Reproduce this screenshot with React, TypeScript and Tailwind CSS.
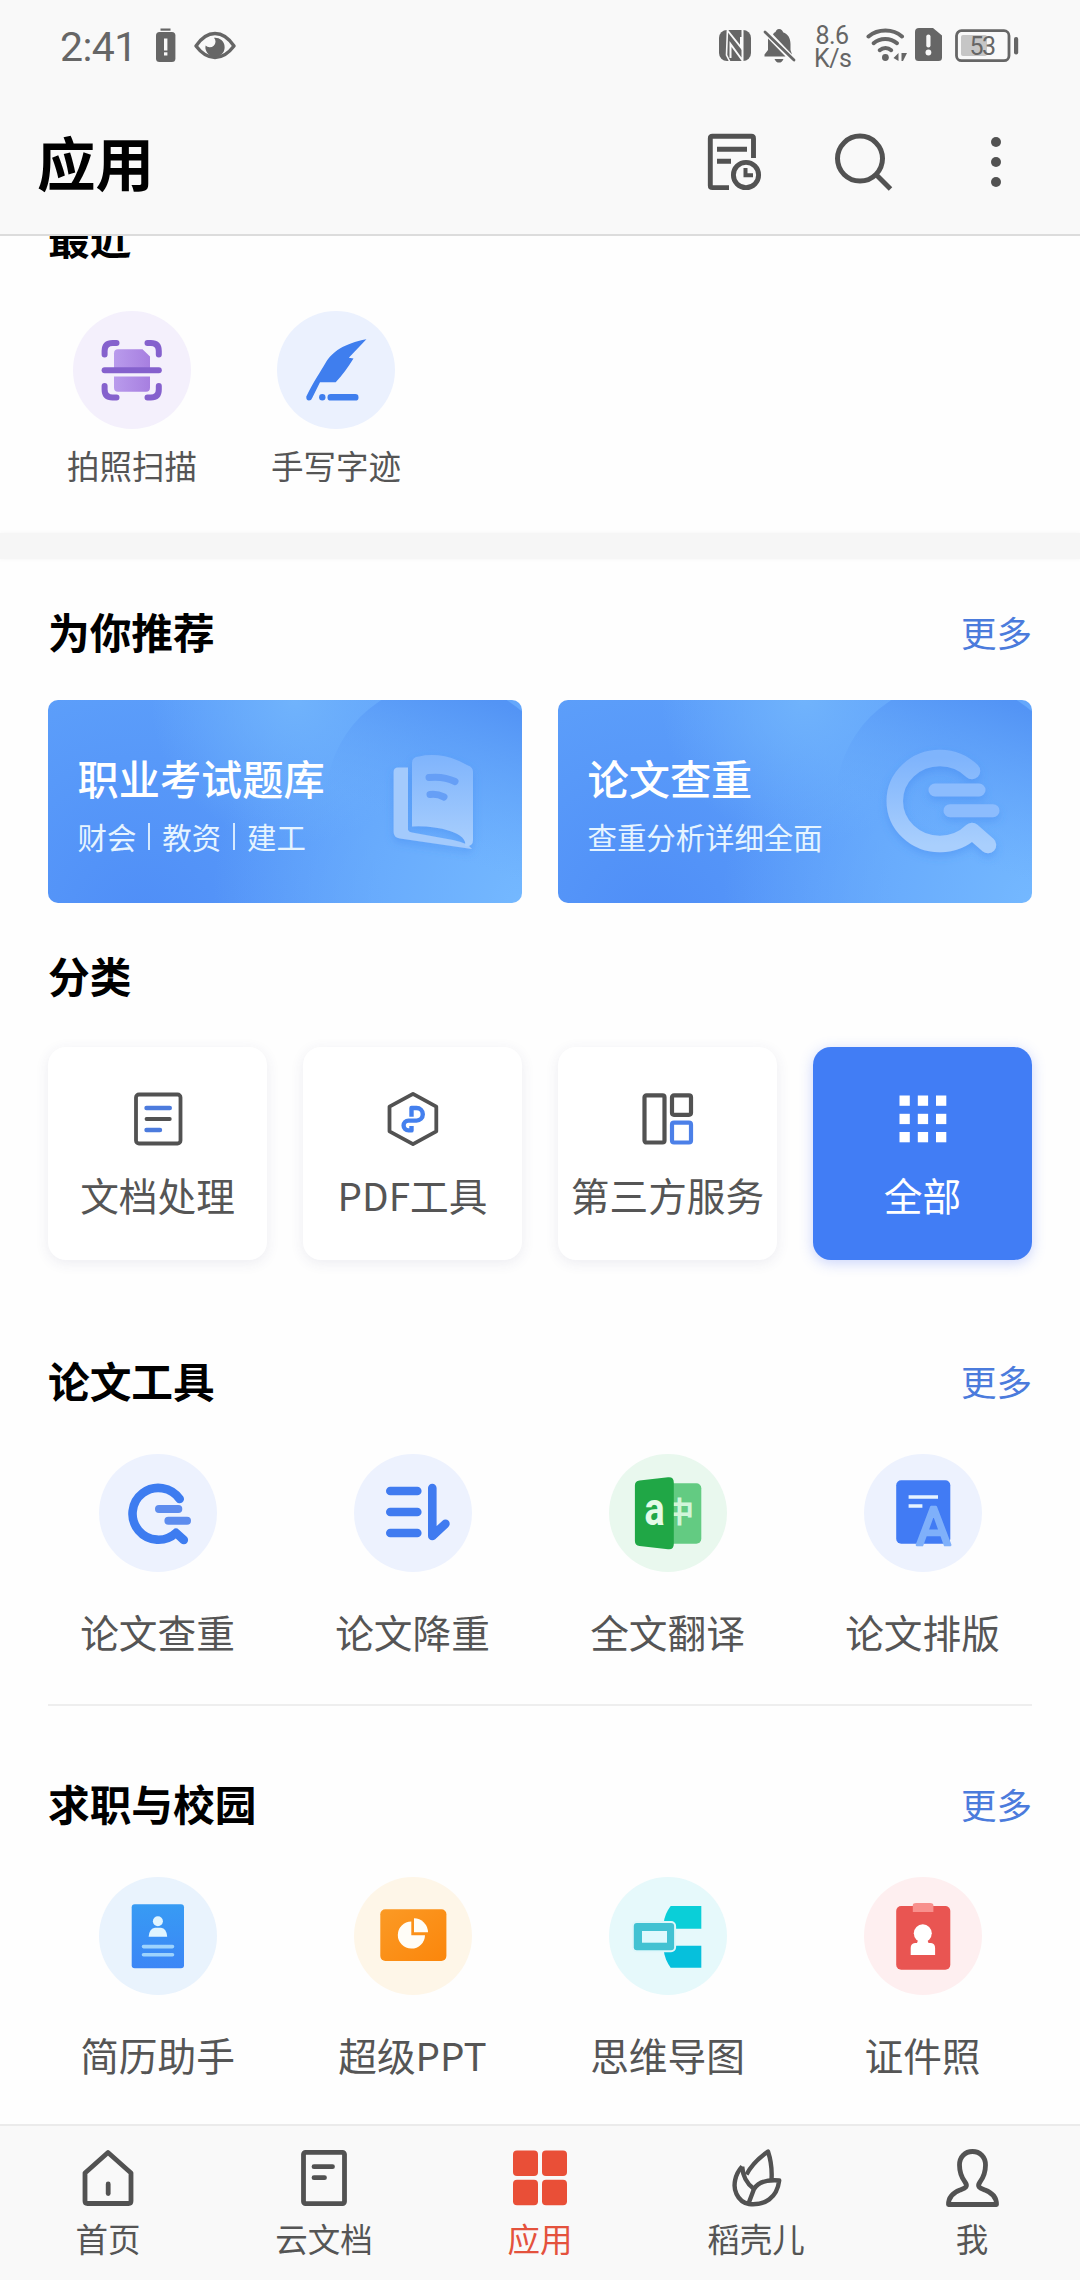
import React from "react";

const INK = "#525252";
const STATUS = "#666666";

/* ---------- Status bar ---------- */

function StatusBar() {
  return (
    <div className="flex h-[94px] items-center pl-[60px] text-[#666666]">
      <span className="w-[96px] font-[Roboto] text-[41px] leading-none tracking-[-0.6px]">2:41</span>
      <svg width="20" height="40" viewBox="0 0 20 40" fill={STATUS}>
        <rect x="4.5" y="1.5" width="10" height="2.2" />
        <rect x="0" y="5" width="19.4" height="30" rx="3.5" />
        <rect x="8" y="11.5" width="3.4" height="12" fill="#f9f9f9" />
        <rect x="8" y="25.3" width="3.4" height="3.2" fill="#f9f9f9" />
      </svg>
      <svg className="ml-[18px]" width="42" height="40" viewBox="0 0 42 40" fill="none">
        <path d="M2 19C8 10 14.500 6.500 21 6.500S34 10 40 19C34 27 27.500 30.500 21 30.500S8 27 2 19Z" stroke={STATUS} strokeWidth="3.4" strokeLinejoin="round" />
        <path d="M20 10.700A9.600 9.600 0 1 1 11.600 18.500A4.500 4.500 0 1 0 20 10.700Z" fill={STATUS} />
      </svg>

      <div className="ml-[483px] flex items-center">
        <svg width="33" height="40" viewBox="0 0 33 40">
          <rect x="0" y="3" width="32" height="31" rx="8" fill={STATUS} />
          <g fill="none" stroke="#f9f9f9">
            <path d="M8.500 1.500L7.500 28L11 35" strokeWidth="1.600" />
            <path d="M8.500 3.500L22 20.500V10" strokeWidth="2" />
            <path d="M23.500 1.500V33.500L11.500 17V31" strokeWidth="2" />
          </g>
        </svg>
        <svg className="ml-[11px]" width="33" height="40" viewBox="0 0 33 40">
          <path d="M16 2C18.500 2 20 4 20 5.200C25 7 27.500 11 27.500 17V23L29 27.500L10 7.500C10.500 6.500 11 5.600 12.500 5C13 3.500 14 2 16 2Z" fill={STATUS} />
          <path d="M5 11.500L22.500 29.500H1.500V27.500L5 23Z" fill={STATUS} />
          <path d="M11.500 32H20.500C19.500 34.500 18 35.600 16 35.600S12.500 34.500 11.500 32Z" fill={STATUS} />
          <path d="M2 5L31 33" stroke={STATUS} strokeWidth="2.800" strokeLinecap="round" />
        </svg>
        <div className="ml-[18px] w-[40px] pr-[4px] text-center font-[Roboto] text-[25px] leading-[23px] tracking-[-0.5px]">
          8.6
          <br />
          K/s
        </div>
        <svg className="ml-[12px]" width="43" height="40" viewBox="0 0 43 40" fill="none" stroke={STATUS} strokeLinecap="round" strokeWidth="4">
          <path d="M2.500 9.500C12 1.500 27 1.500 36 9.500" />
          <path d="M7.600 16.200C14 10.500 24.500 10.500 31 16.200" />
          <path d="M13.700 23.200C17 20.300 22 20.300 25.200 23.200" />
          <circle cx="19.400" cy="30.500" r="3.400" fill={STATUS} stroke="none" />
          <path d="M32.500 26V34L27.500 31Z M35.500 26H41L37 34H35.500Z" fill={STATUS} stroke="none" />
        </svg>
        <svg className="ml-[6px]" width="28" height="40" viewBox="0 0 28 40">
          <path d="M4 1H18L27 8.500V30.500Q27 34 23.500 34H3.500Q0 34 0 30.500V5Q0 1 4 1Z" fill={STATUS} />
          <path d="M13.400 9.500V18.500" stroke="#f9f9f9" strokeWidth="4.200" strokeLinecap="round" />
          <circle cx="13.400" cy="25.500" r="2.900" fill="#f9f9f9" />
        </svg>
        <svg className="ml-[12px]" width="64" height="40" viewBox="0 0 64 40">
          <rect x="6" y="8" width="26" height="21" rx="2" fill="#c6c6c6" />
          <rect x="1.500" y="3.700" width="52.500" height="30" rx="5" fill="none" stroke={STATUS} strokeWidth="2.800" />
          <rect x="59" y="10" width="4.200" height="17.500" rx="2" fill={STATUS} />
          <text x="27" y="27.500" fontSize="25" textAnchor="middle" fontFamily="Roboto, sans-serif" letterSpacing="-1.500" fill={STATUS}>53</text>
        </svg>
      </div>
    </div>
  );
}

/* ---------- Title bar ---------- */

function TitleBar() {
  return (
    <div className="flex h-[140px] items-start pl-[37px]">
      <h1 className="mt-[25px] flex-1 text-[58.500px] leading-[84px] font-bold text-black">应用</h1>
      <div className="mt-[38px] flex">
        <svg width="60" height="60" viewBox="0 0 60 60" fill="none" stroke={INK} strokeWidth="4.900">
          <path d="M49.500 26V6.500Q49.500 4.300 47.300 4.300H8.500Q6.300 4.300 6.300 6.500V53.400Q6.300 55.600 8.500 55.600H25" />
          <path d="M13 17.300H43M13 29.300H27" />
          <circle cx="42" cy="43" r="12.600" />
          <path d="M41.500 36V43.200H49" strokeWidth="4" />
        </svg>
        <svg className="ml-[70px]" width="60" height="60" viewBox="0 0 60 60" fill="none" stroke={INK} strokeWidth="5">
          <circle cx="26" cy="26.600" r="22.500" />
          <path d="M42.500 43L56.500 57" />
        </svg>
        <svg className="mr-[54px] ml-[72px]" width="60" height="60" viewBox="0 0 60 60" fill={INK}>
          <circle cx="30" cy="10" r="5" />
          <circle cx="30" cy="30" r="5" />
          <circle cx="30" cy="50" r="5" />
        </svg>
      </div>
    </div>
  );
}

/* ---------- App glyphs, drawn on a 118 x 118 disc ---------- */

const ScanGlyph = () => (
  <g fill="none" strokeLinecap="round">
    <defs>
      <linearGradient id="scan" x1="0" x2="1">
        <stop offset="0" stopColor="#b99bec" />
        <stop offset="1" stopColor="#a77fe0" />
      </linearGradient>
    </defs>
    <path d="M45 38.300H69.500L77 45.500V57H41V42.300Q41 38.300 45 38.300Z" fill="url(#scan)" />
    <path d="M41 65.500H77V76.700Q77 80.700 73 80.700H45Q41 80.700 41 76.700Z" fill="url(#scan)" />
    <g stroke="#8561cd" strokeWidth="6">
      <path d="M31.600 43.500V40Q31.600 32 39.600 32H43.500" />
      <path d="M74.500 32H77.800Q85.800 32 85.800 40V43.500" />
      <path d="M31.600 75V78.500Q31.600 86.500 39.600 86.500H43.500" />
      <path d="M74.500 86.500H77.800Q85.800 86.500 85.800 78.500V75" />
      <path d="M31.600 59.300H85.800" />
    </g>
  </g>
);

const FeatherGlyph = () => (
  <g fill="#3f7eee">
    <path d="M89.400 28.300C67 32.500 55 41 48.500 52C43 61.500 37 70 29.300 85.500Q29 89.600 32 89.600Q34.300 89.600 35.200 87L43 71.300H58.700C65 65 71 56 76.500 47.500L71.800 46.800Z" />
    <circle cx="45.300" cy="86.300" r="3.200" />
    <rect x="50.500" y="83.100" width="31" height="6.500" rx="3.200" />
  </g>
);

const CheckGlyph = () => (
  <g fill="none" strokeLinecap="round" strokeLinejoin="round">
    <path d="M80.700 45A25.900 25.900 0 1 0 77 78.800L84.800 86" stroke="#3d7cf0" strokeWidth="8.600" />
    <path d="M60 55H79.300M69.400 66.700H88" stroke="#5d8cee" strokeWidth="8" />
  </g>
);

const ReduceGlyph = () => (
  <g fill="none" stroke="#407bf0" strokeLinecap="round" strokeLinejoin="round" strokeWidth="8.600">
    <path d="M36.300 37H63.300M36.300 58H63.300M36.300 79H63.300" />
    <path d="M78.300 34V82L91.400 69.800" />
  </g>
);

const TranslateGlyph = () => (
  <g>
    <rect x="56" y="29.300" width="36.300" height="60.400" rx="5" fill="#63cb82" />
    <text x="70.500" y="69" fontSize="29" fontWeight="700" textAnchor="middle" fontFamily="'Noto Sans CJK SC', sans-serif" fill="#d2f5da">中</text>
    <path d="M30.500 26.500L59 23.300Q64.800 22.700 64.800 28.500V90Q64.800 96 59 95.300L30.500 92Q25.900 91.500 25.900 87V31.500Q25.900 27 30.500 26.500Z" fill="#20a746" />
    <g transform="translate(45.5 70.500) scale(.82 1)">
      <text fontSize="46" fontWeight="700" textAnchor="middle" fontFamily="Roboto, sans-serif" fill="#e4fbe8">a</text>
    </g>
  </g>
);

const TypesetGlyph = () => (
  <g>
    <rect x="32.200" y="26.300" width="54.100" height="63.400" rx="5" fill="#417bf4" />
    <path d="M44.600 43H74M44.600 52H58.400" stroke="#e6f3ff" strokeWidth="3.400" />
    <text x="69.500" y="90.500" fontSize="53" textAnchor="middle" fontFamily="Roboto, sans-serif" fill="#7fb0fa" stroke="#7fb0fa" strokeWidth="2.600" strokeLinejoin="round">A</text>
  </g>
);

const ResumeGlyph = () => (
  <g>
    <defs>
      <linearGradient id="resume" x1="0" y1="0" x2="0" y2="1">
        <stop offset="0" stopColor="#379bf4" />
        <stop offset="1" stopColor="#3c86f6" />
      </linearGradient>
    </defs>
    <rect x="32.700" y="27.300" width="52.300" height="64" rx="3" fill="url(#resume)" />
    <circle cx="58.900" cy="44.300" r="5" fill="#e0f5ff" />
    <path d="M49.600 59.700Q50.500 51 56 50.700H62Q67.500 51 68.200 59.700Z" fill="#e0f5ff" />
    <path d="M44.500 69.600H73.500M44.500 77.700H73.500" stroke="#9dd3fd" strokeWidth="3.600" strokeLinecap="round" />
  </g>
);

const SlidesGlyph = () => (
  <g>
    <defs>
      <linearGradient id="slides" x1="0" y1="0" x2="1" y2="1">
        <stop offset="0" stopColor="#fb9a25" />
        <stop offset="1" stopColor="#fb860b" />
      </linearGradient>
    </defs>
    <rect x="26.300" y="32.300" width="66.100" height="51.700" rx="5" fill="url(#slides)" />
    <path d="M57.300 44.400V58.200H71A13.600 13.600 0 1 1 57.300 44.400Z" fill="#fffdf7" />
    <path d="M60 41.300A14.200 14.200 0 0 1 74 55.300H60Z" fill="#fffdf7" />
  </g>
);

const MindMapGlyph = () => (
  <g>
    <path d="M61.700 29H92.300V51.700H66L54.800 46Q55.500 37 61.700 29Z" fill="#0acfd8" />
    <path d="M54.800 74L66 68.700H92.300V90.700H61.700Q56 83 54.800 74Z" fill="#06c0dc" />
    <rect x="24.800" y="46" width="40.300" height="27.300" rx="3" fill="#42c2d2" stroke="#dff7fa" strokeWidth="4" paintOrder="stroke" />
    <rect x="33" y="54" width="25" height="11.700" fill="#dff9fd" />
  </g>
);

const IdPhotoGlyph = () => (
  <g>
    <rect x="32.200" y="29" width="54.100" height="63.700" rx="5" fill="#e95552" />
    <path d="M48.800 28Q49 26 52 26H66Q69.200 26 69.400 28V35H48.800Z" fill="#f8908d" />
    <circle cx="58.800" cy="56.300" r="9" fill="#fff" />
    <path d="M54.500 62H63L64.500 66H67Q71.100 66.500 71.100 71V78H46.700V71Q46.700 66.500 51 66H53Z" fill="#fff" />
  </g>
);

function Disc({ tint, children }: { tint: string; children: React.ReactNode }) {
  return (
    <svg width="118" height="118" viewBox="0 0 118 118">
      <circle cx="59" cy="59" r="59" fill={tint} />
      {children}
    </svg>
  );
}

type App = { name: string; tint: string; glyph: React.ReactNode };

const recentApps: App[] = [
  { name: "拍照扫描", tint: "#f4f0fc", glyph: <ScanGlyph /> },
  { name: "手写字迹", tint: "#ebf1fe", glyph: <FeatherGlyph /> },
];

const paperApps: App[] = [
  { name: "论文查重", tint: "#edf2fe", glyph: <CheckGlyph /> },
  { name: "论文降重", tint: "#edf2fe", glyph: <ReduceGlyph /> },
  { name: "全文翻译", tint: "#e9f8ee", glyph: <TranslateGlyph /> },
  { name: "论文排版", tint: "#edf2fe", glyph: <TypesetGlyph /> },
];

const campusApps: App[] = [
  { name: "简历助手", tint: "#e9f3fd", glyph: <ResumeGlyph /> },
  { name: "超级PPT", tint: "#fef6e8", glyph: <SlidesGlyph /> },
  { name: "思维导图", tint: "#e6f9fb", glyph: <MindMapGlyph /> },
  { name: "证件照", tint: "#feeff0", glyph: <IdPhotoGlyph /> },
];

function AppRow({ apps }: { apps: App[] }) {
  return (
    <div className="mt-[43px] grid grid-cols-4 gap-9">
      {apps.map((a) => (
        <div key={a.name} className="flex flex-col items-center">
          <Disc tint={a.tint}>{a.glyph}</Disc>
          <span className="mt-[30px] text-[38.700px] leading-[58px] whitespace-nowrap text-[#555555]">{a.name}</span>
        </div>
      ))}
    </div>
  );
}

function Heading({ title, more, className = "" }: { title: string; more?: boolean; className?: string }) {
  return (
    <div className={`flex h-[60px] items-center justify-between ${className}`}>
      <h2 className="pb-[3px] text-[41.700px] leading-[60px] font-bold text-black">{title}</h2>
      {more && <a className="text-[35.500px] leading-[60px] text-[#4b7bdc]">更多</a>}
    </div>
  );
}

/* ---------- Banners ---------- */

function Banner({ title, children, art, id }: { title: string; children: React.ReactNode; art: React.ReactNode; id: string }) {
  return (
    <div className="relative h-[203px] w-[474px] overflow-hidden rounded-[10px] bg-[#5c9efa] bg-[radial-gradient(circle_at_52%_0%,#70b3fc_0%,transparent_45%),radial-gradient(circle_at_100%_100%,#74b8ff_0%,transparent_60%),radial-gradient(circle_at_20%_110%,#4f8ef7_0%,transparent_55%)]">
      <svg className="absolute inset-0" width="474" height="203" viewBox="0 0 474 203">
        <defs>
          <linearGradient id={`${id}-disc`} x1=".8" y1="0" x2=".45" y2="1">
            <stop offset=".1" stopColor="#5394f5" />
            <stop offset=".75" stopColor="#69acfc" stopOpacity="0" />
          </linearGradient>
          <linearGradient id={`${id}-art`} x1="0" y1="0" x2="0" y2="1">
            <stop offset="0" stopColor="#7fb4fc" />
            <stop offset="1" stopColor="#a9cffd" />
          </linearGradient>
          <filter id={`${id}-shadow`} x="-20%" y="-20%" width="140%" height="150%">
            <feDropShadow dx="0" dy="4" stdDeviation="4" floodColor="#3f86ee" floodOpacity=".4" />
          </filter>
        </defs>
        <circle cx="396" cy="100" r="118" fill={`url(#${id}-disc)`} />
        {art}
      </svg>
      <div className="relative pt-[47px] pl-[29.500px] text-white">
        <div className="text-[41.200px] leading-[60px] font-medium">{title}</div>
        <div className="mt-[7px] flex h-[44px] items-center text-[29.400px] leading-[44px] text-[#e6f4ff]">{children}</div>
      </div>
    </div>
  );
}

const BookArt = () => (
  <g filter="url(#book-shadow)">
    <path d="M350 67.500H360V130Q361 132 364 132.500L405 140Q420 143 424 149L352 138.500Q345.600 137.500 345.600 132V72Q345.600 67.500 350 67.500Z" fill="#a3cafc" />
    <path d="M371 56.500Q364 57 364 63V126.500Q384 125.500 402 131Q419 136.500 417 146Q425 147 425 140V72Q425 67 420 65.500Q403 56 390 55.300Q379 54.600 371 56.500Z" fill="url(#book-art)" />
    <path d="M381 77.500Q396 76 407 81.500M382 94.500Q389 93.500 396 97" fill="none" stroke="#669ff6" strokeWidth="7" strokeLinecap="round" />
  </g>
);

const SearchArt = () => (
  <g filter="url(#paper-shadow)" fill="none" strokeLinecap="round" strokeLinejoin="round">
    <path d="M414 71A45 43 0 1 0 414 131L430 145" stroke="url(#paper-art)" strokeWidth="16.500" />
    <path d="M377 90H421M392 110.700H435" stroke="#8cbcfd" strokeWidth="13" />
  </g>
);

/* ---------- Categories ---------- */

const categories = [
  {
    name: "文档处理",
    icon: (
      <g fill="none" strokeLinecap="round">
        <rect x="8" y="5.500" width="44.500" height="49" rx="3" stroke={INK} strokeWidth="3.800" />
        <path d="M18.500 19H41.800M18.500 41H32" stroke="#4c7bdd" strokeWidth="4.400" />
        <path d="M18.500 30H41.800" stroke={INK} strokeWidth="3.800" />
      </g>
    ),
  },
  {
    name: "PDF工具",
    icon: (
      <g fill="none" strokeLinejoin="round">
        <path d="M30 4.800L53.300 17.700V42.300L30 55.200L6.500 42.300V17.700Z" stroke={INK} strokeWidth="3.800" />
        <path d="M28.500 27.800V19H33.500A6.300 6.300 0 0 1 33.500 31.600H25.500A4.900 4.900 0 0 0 25.500 41.400H28.500V37" stroke="#4480ee" strokeWidth="4.400" />
      </g>
    ),
  },
  {
    name: "第三方服务",
    icon: (
      <g fill="none" strokeWidth="4.200">
        <rect x="6.500" y="6.300" width="20" height="47.200" rx="2" stroke={INK} />
        <rect x="34" y="6.300" width="19" height="19.500" rx="2" stroke={INK} />
        <rect x="34" y="33.700" width="19" height="19.800" rx="2" stroke="#4c80e8" />
      </g>
    ),
  },
  {
    name: "全部",
    active: true,
    icon: (
      <g fill="#ffffff">
        {[6.5, 24.8, 43].map((y) => [6.5, 24.8, 43].map((x) => <rect key={`${x}-${y}`} x={x} y={y} width="10.300" height="10.300" />))}
      </g>
    ),
  },
];

/* ---------- Bottom navigation ---------- */

const tabs = [
  {
    name: "首页",
    icon: (
      <g>
        <path d="M30 4.500L53 25V53Q53 55.500 50.500 55.500H9.500Q7 55.500 7 53V25Z" />
        <path d="M30.200 36V45.500" strokeLinecap="round" />
      </g>
    ),
  },
  {
    name: "云文档",
    icon: (
      <g>
        <rect x="9.500" y="4.300" width="41" height="51.300" rx="2" />
        <path d="M20 18.700H38.500M20 29.700H30.500" strokeLinecap="round" />
      </g>
    ),
  },
  {
    name: "应用",
    active: true,
    icon: (
      <g fill="#e94f37" stroke="none">
        <rect x="3" y="2.500" width="25" height="25.500" rx="4" />
        <rect x="32" y="2.500" width="25" height="25.500" rx="4" />
        <rect x="3" y="31.800" width="25" height="25.500" rx="4" />
        <rect x="32" y="31.800" width="25" height="25.500" rx="4" />
      </g>
    ),
  },
  {
    name: "稻壳儿",
    icon: (
      <g strokeWidth="4.400">
        <path d="M16.200 18.500C9 26 6.500 38 10.500 46Q14.500 54.500 23 56C39 57.500 51 50 53.200 32.500Q34 31 28 41L22.500 55.500" />
        <path d="M16.200 18.500Q17 33 28 41" />
        <path d="M20.500 26.500Q27 14 42 3.500Q46.500 17 45.500 32" />
      </g>
    ),
  },
  {
    name: "我",
    icon: (
      <path d="M30.500 3.500C38 3.500 43.500 9 43.500 17C43.500 25 41 30 38 34C34.500 39 38 40 43 42C51 45 54.500 49.500 54.500 56.500H6.500C6.500 49.500 10 45 18 42C23 40 26.500 39 23 34C20 30 17.500 25 17.500 17C17.500 9 23 3.500 30.500 3.500Z" />
    ),
  },
];

export default function App() {
  return (
    <div className="flex h-[2280px] w-[1080px] flex-col overflow-hidden bg-[#fefefe] font-['Noto_Sans_CJK_SC',sans-serif]">
      <header className="h-[236px] shrink-0 border-b-2 border-[#dcdcdc] bg-[#f9f9f9]">
        <StatusBar />
        <TitleBar />
      </header>

      <main className="h-[1888px] shrink-0 overflow-hidden">
        <section className="flow-root h-[297px] px-[30px]">
          <Heading title="最近" className="-mt-[28px] pl-[18px]" />
          <div className="mt-[43px] flex">
            {recentApps.map((a) => (
              <div key={a.name} className="flex w-[204px] flex-col items-center">
                <Disc tint={a.tint}>{a.glyph}</Disc>
                <span className="mt-[12px] text-[32.500px] leading-[48px] text-[#555555]">{a.name}</span>
              </div>
            ))}
          </div>
        </section>

        <div className="h-[26px] bg-[#f6f6f6] shadow-[0_0_5px_#f6f6f6]" />

        <section className="px-12 pt-[43px]">
          <Heading title="为你推荐" more />
          <div className="mt-[38px] flex justify-between">
            <Banner id="book" title="职业考试题库" art={<BookArt />}>
              <span>财会</span>
              <i className="mx-3 h-[27px] w-[2px] bg-[#d6eaff]" />
              <span>教资</span>
              <i className="mx-3 h-[27px] w-[2px] bg-[#d6eaff]" />
              <span>建工</span>
            </Banner>
            <Banner id="paper" title="论文查重" art={<SearchArt />}>
              查重分析详细全面
            </Banner>
          </div>

          <Heading title="分类" className="mt-[43px]" />
          <div className="mt-[41px] grid grid-cols-4 gap-9">
            {categories.map((c) => (
              <div
                key={c.name}
                className={`flex h-[213px] flex-col items-center rounded-[18px] pt-[42px] ${
                  c.active
                    ? "bg-[#417df5] text-white shadow-[0_3px_14px_rgba(65,100,245,0.28)]"
                    : "bg-white text-[#555555] shadow-[0_3px_14px_rgba(60,60,110,0.09)]"
                }`}
              >
                <svg width="60" height="60" viewBox="0 0 60 60">{c.icon}</svg>
                <span className="mt-[16px] text-[38.700px] leading-[58px] whitespace-nowrap">{c.name}</span>
              </div>
            ))}
          </div>

          <Heading title="论文工具" more className="mt-[91px]" />
          <AppRow apps={paperApps} />

          <div className="mt-[44px] h-[2px] bg-[#eeeeee]" />

          <Heading title="求职与校园" more className="mt-[68px]" />
          <AppRow apps={campusApps} />
        </section>
      </main>

      <nav className="grid h-[156px] shrink-0 grid-cols-5 border-t-2 border-[#ebebeb] bg-[#f9f9f9]">
        {tabs.map((t) => (
          <div key={t.name} className={`flex flex-col items-center pt-[22px] ${t.active ? "text-[#e4523d]" : "text-[#555555]"}`}>
            <svg width="60" height="60" viewBox="0 0 60 60" fill="none" stroke={INK} strokeWidth="4.800" strokeLinejoin="round">
              {t.icon}
            </svg>
            <span className="mt-[7px] text-[32.500px] leading-[46px]">{t.name}</span>
          </div>
        ))}
      </nav>
    </div>
  );
}
